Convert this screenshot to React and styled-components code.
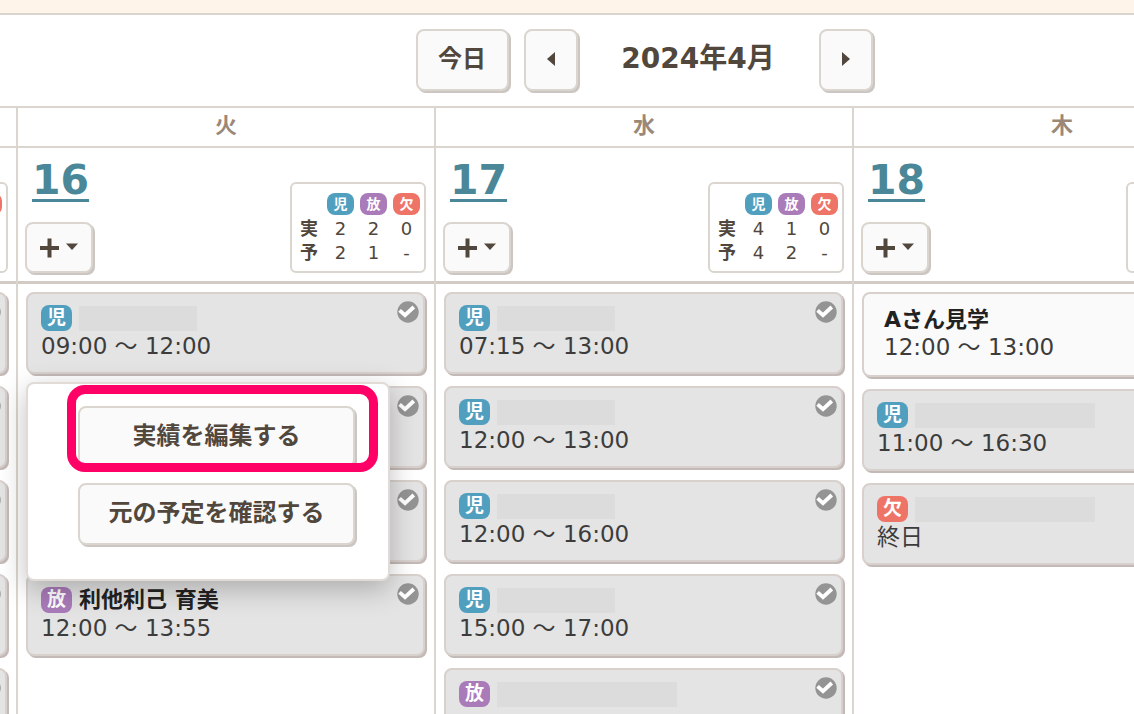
import React from "react";
import styled, { createGlobalStyle, css } from "styled-components";

const GlobalStyle = createGlobalStyle`
  * {
    box-sizing: border-box;
  }

  body {
    margin: 0;
    background: #fff;
    color: #3c3c3c;
    font-family: "DejaVu Sans", "Noto Sans CJK JP", sans-serif;
    overflow: hidden;
  }

  button {
    font-family: inherit;
    cursor: pointer;
  }
`;

const line = "#dbd5cf";
const kinds = {
  child: { label: "児", color: "#519fbf" },
  after: { label: "放", color: "#a97bb9" },
  absent: { label: "欠", color: "#ee7468" },
};

const TopBand = styled.div`
  height: 15px;
  background: #fff4ea;
  border-bottom: 2px solid ${line};
`;

const Toolbar = styled.header`
  display: flex;
  align-items: center;
  justify-content: center;
  height: 91px;
  padding: 0 0 2px 154px;
`;

const Button = styled.button`
  display: flex;
  align-items: center;
  justify-content: center;
  height: 62px;
  padding: 0 0 2px;
  border: 2px solid ${line};
  border-radius: 8px;
  background: #fafafa;
  box-shadow: 2px 2px 0 #cbc6c2;
  color: #51473c;
  font-size: 24px;
  font-weight: 700;
  line-height: 32px;
`;

const TodayButton = styled(Button)`
  width: 93px;
  margin-right: 15px;
`;

const ArrowButton = styled(Button)`
  width: 54px;
`;

const Month = styled.h1`
  width: 241px;
  margin: 0;
  padding-bottom: 2px;
  color: #51473c;
  font-size: 28px;
  line-height: 40px;
  text-align: center;
`;

const Board = styled.main`
  display: grid;
  grid-template-columns: repeat(4, minmax(418px, 1fr));
  margin-left: -402px;
  border-top: 2px solid ${line};
`;

const Column = styled.section`
  min-height: 606px;
  border-left: 2px solid ${line};
`;

const Weekday = styled.div`
  height: 40px;
  border-bottom: 2px solid ${line};
  color: #9b8878;
  font-size: 22px;
  font-weight: 700;
  line-height: 36px;
  text-align: center;
`;

const DayHeader = styled.div`
  display: flex;
  justify-content: space-between;
  align-items: flex-end;
  height: 136px;
  padding: 0 8px 8px 7px;
  border-bottom: 3px solid #d2cbc4;
`;

const DayTools = styled.div`
  display: flex;
  flex-direction: column;
  align-items: flex-start;
  gap: 18px;
`;

const DayLink = styled.a`
  margin-left: 7px;
  color: #4a8798;
  font-size: 41px;
  font-weight: 700;
  line-height: 48px;
  text-decoration: underline;
  text-decoration-thickness: 3px;
  text-underline-offset: 5px;
  text-decoration-skip-ink: none;
`;

const AddButton = styled(Button)`
  width: 68px;
  height: 51px;
  padding: 0;
`;

const Summary = styled.div`
  width: 136px;
  padding: 6px 1px 6px 8px;
  border: 2px solid ${line};
  border-radius: 6px;

  table {
    width: 100%;
    border-collapse: collapse;
    table-layout: fixed;
  }

  tr {
    height: 24px;
  }

  thead tr {
    height: 27px;
  }

  th,
  td {
    width: 33px;
    padding: 0;
    font-size: 18px;
    line-height: 24px;
    text-align: center;
    color: #51473c;
  }

  th:first-child {
    width: 24px;
    text-align: left;
  }
`;

const Badge = styled.span`
  display: flex;
  flex: none;
  align-items: center;
  justify-content: center;
  border-radius: 8px;
  background: ${(props) => kinds[props.$kind].color};
  color: #fff;
  font-weight: 700;

  ${(props) =>
    props.$small
      ? css`
          width: 27px;
          height: 22px;
          margin: 0 auto;
          font-size: 14px;
          line-height: 20px;
        `
      : css`
          width: 31px;
          height: 26px;
          padding-bottom: 2px;
          font-size: 19px;
          line-height: 24px;
        `}
`;

const Events = styled.div`
  position: relative;
  display: flex;
  flex-direction: column;
  gap: 12px;
  padding: 8px 9px 0 8px;
`;

const NameRow = styled.div`
  display: flex;
  align-items: center;
  gap: 7px;
  height: 26px;
`;

const Name = styled.strong`
  color: #222;
  font-size: 22px;
  line-height: 24px;
`;

const Card = styled.article`
  display: flex;
  justify-content: space-between;
  height: 82px;
  padding: 11px 4px 0 13px;
  border: 2px solid #d8d0cc;
  border-radius: 8px;
  background: #e4e4e4;
  box-shadow: 2px 2px 0 #c3b9b6;

  > svg {
    flex: none;
    margin-top: -4px;
  }

  ${(props) =>
    props.$visit &&
    css`
      height: 85px;
      padding: 14px 4px 0 20px;
      background: #fafafa;

      ${NameRow} {
        height: 24px;
      }
    `}
`;

const Mask = styled.span`
  width: ${(props) => (props.$wide ? 180 : 118)}px;
  height: 25px;
  background: #dcdcdc;
`;

const Time = styled.div`
  font-size: 23px;
  line-height: 30px;
`;

const Popup = styled.div`
  position: absolute;
  top: 98px;
  left: 8px;
  display: flex;
  flex-direction: column;
  gap: 15px;
  width: 364px;
  padding: 22px 33px 34px 50px;
  border: 2px solid #e0dbd6;
  border-radius: 8px;
  background: #fff;
  box-shadow: 0 8px 28px rgba(0, 0, 0, 0.25);
`;

const Highlighted = styled.div`
  position: relative;
  display: grid;

  &::after {
    content: "";
    position: absolute;
    inset: -21px -23px -4px -11px;
    border: 9px solid #ff0066;
    border-radius: 18px;
    pointer-events: none;
  }
`;

function CheckIcon() {
  return (
    <svg width="22" height="22" viewBox="0 0 22 22" aria-hidden="true">
      <circle cx="11" cy="11" r="10.7" fill="#949494" />
      <path d="M2.6 9.4l5.4 4.8 8.8-8.2" fill="none" stroke="#fff" strokeWidth="3.8" />
    </svg>
  );
}

function Arrow({ right }) {
  return (
    <svg width="10" height="16" viewBox="0 0 10 16" aria-hidden="true">
      <path d={right ? "M1 1l8 7-8 7z" : "M9 1L1 8l8 7z"} fill="#51473c" />
    </svg>
  );
}

function AddIcon() {
  return (
    <svg width="40" height="20" viewBox="0 0 40 20" aria-hidden="true">
      <path d="M10.5 0.5v19M1 10h19" stroke="#51473c" strokeWidth="4" />
      <path d="M27 5.5h12l-6 6.5z" fill="#51473c" />
    </svg>
  );
}

function DaySummary({ actual, planned }) {
  return (
    <Summary>
      <table>
        <thead>
          <tr>
            <th />
            {Object.keys(kinds).map((kind) => (
              <th key={kind} scope="col">
                <Badge $kind={kind} $small>{kinds[kind].label}</Badge>
              </th>
            ))}
          </tr>
        </thead>
        <tbody>
          <tr>
            <th scope="row">実</th>
            {actual.map((n, i) => <td key={i}>{n}</td>)}
          </tr>
          <tr>
            <th scope="row">予</th>
            {planned.map((n, i) => <td key={i}>{n}</td>)}
          </tr>
        </tbody>
      </table>
    </Summary>
  );
}

function EventCard({ kind, name, wide, time }) {
  return (
    <Card $visit={!kind}>
      <div>
        <NameRow>
          {kind && <Badge $kind={kind}>{kinds[kind].label}</Badge>}
          {name ? <Name>{name}</Name> : <Mask $wide={wide} />}
        </NameRow>
        <Time>{time}</Time>
      </div>
      {kind && kind !== "absent" && <CheckIcon />}
    </Card>
  );
}

const days = [
  {
    weekday: "月",
    date: 15,
    actual: [3, 2, 0],
    planned: [3, 2, "-"],
    events: [
      { kind: "child", time: "09:00 ～ 12:00" },
      { kind: "child", time: "10:00 ～ 12:00" },
      { kind: "child", time: "12:00 ～ 16:00" },
      { kind: "after", time: "13:00 ～ 17:00" },
      { kind: "after", time: "15:00 ～ 17:00" },
    ],
  },
  {
    weekday: "火",
    date: 16,
    actual: [2, 2, 0],
    planned: [2, 1, "-"],
    menu: true,
    events: [
      { kind: "child", time: "09:00 ～ 12:00" },
      { kind: "child" },
      { kind: "after" },
      { kind: "after", name: "利他利己 育美", time: "12:00 ～ 13:55" },
    ],
  },
  {
    weekday: "水",
    date: 17,
    actual: [4, 1, 0],
    planned: [4, 2, "-"],
    events: [
      { kind: "child", time: "07:15 ～ 13:00" },
      { kind: "child", time: "12:00 ～ 13:00" },
      { kind: "child", time: "12:00 ～ 16:00" },
      { kind: "child", time: "15:00 ～ 17:00" },
      { kind: "after", wide: true },
    ],
  },
  {
    weekday: "木",
    date: 18,
    actual: [1, 0, 1],
    planned: [2, 0, "-"],
    events: [
      { name: "Aさん見学", time: "12:00 ～ 13:00" },
      { kind: "child", wide: true, time: "11:00 ～ 16:30" },
      { kind: "absent", wide: true, time: "終日" },
    ],
  },
];

function App() {
  return (
    <>
      <GlobalStyle />
      <TopBand />
      <Toolbar>
        <TodayButton>今日</TodayButton>
        <ArrowButton aria-label="前の月"><Arrow /></ArrowButton>
        <Month>2024年4月</Month>
        <ArrowButton aria-label="次の月"><Arrow right /></ArrowButton>
      </Toolbar>
      <Board>
        {days.map((day) => (
          <Column key={day.date}>
            <Weekday>{day.weekday}</Weekday>
            <DayHeader>
              <DayTools>
                <DayLink href={`#${day.date}`}>{day.date}</DayLink>
                <AddButton aria-label="追加"><AddIcon /></AddButton>
              </DayTools>
              <DaySummary actual={day.actual} planned={day.planned} />
            </DayHeader>
            <Events>
              {day.events.map((event, i) => <EventCard key={i} {...event} />)}
              {day.menu && (
                <Popup>
                  <Highlighted>
                    <Button>実績を編集する</Button>
                  </Highlighted>
                  <Button>元の予定を確認する</Button>
                </Popup>
              )}
            </Events>
          </Column>
        ))}
      </Board>
    </>
  );
}

export default App;
